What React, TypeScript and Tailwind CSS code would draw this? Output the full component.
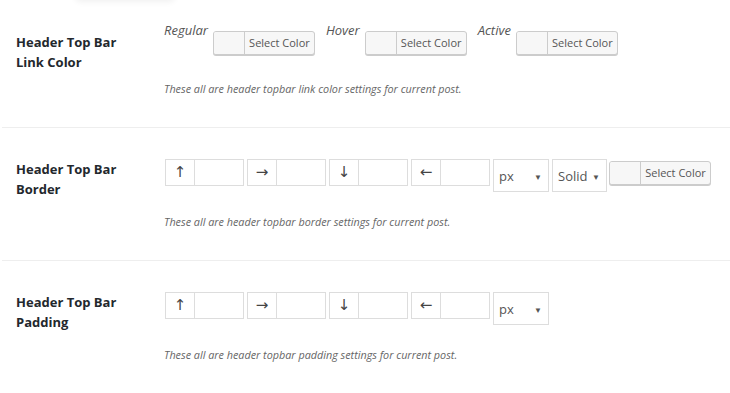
import React from "react";

const font = { fontFamily: '"Open Sans", "Noto Sans", sans-serif' };

function ColorButton() {
  return (
    <div className="flex h-[24px] w-[102px] shrink-0 overflow-hidden rounded-[3px] border border-[#cccccc] bg-[#f7f7f7] shadow-[0_1px_0_#cccccc]">
      <div className="w-[31px] shrink-0 border-r border-[#cccccc] bg-[#f7f7f7]" />
      <div className="flex flex-1 items-center justify-center text-[11px] text-[#555]">
        Select Color
      </div>
    </div>
  );
}

function ArrowInput({ arrow }: { arrow: string }) {
  return (
    <div className="flex h-[27px] w-[79px] shrink-0 border border-[#dddddd] bg-white">
      <div className="flex w-[29px] shrink-0 items-center justify-center border-r border-[#dddddd] text-[15px] text-[#444]" style={{ fontFamily: '"DejaVu Sans", sans-serif' }}>
        {arrow}
      </div>
      <div className="flex-1" />
    </div>
  );
}

function Select({ label, w }: { label: string; w: string }) {
  return (
    <div className={`flex h-[33px] ${w} shrink-0 items-center justify-between border border-[#dddddd] bg-white pl-[5px] pr-[6px] pt-[3px] text-[13px] text-[#555]`}>
      <span>{label}</span>
      <span className="text-[8px] text-[#555]">▼</span>
    </div>
  );
}

function Heading({ children }: { children: React.ReactNode }) {
  return (
    <div className="w-[164px] shrink-0 pl-4 text-[13px] font-bold leading-[20px] text-[#23282d]">
      {children}
    </div>
  );
}

function Desc({ children }: { children: React.ReactNode }) {
  return <div className="text-[10.8px] italic leading-[14px] text-[#666]">{children}</div>;
}

export default function App() {
  return (
    <div className="relative h-[393px] w-[730px] overflow-hidden bg-white" style={font}>
      <div className="absolute left-[75px] top-[-10px] h-[10px] w-[100px] rounded-full shadow-[0_2px_6px_rgba(0,0,0,0.06)]" />
      {/* Row 1 */}
      <div className="flex pt-[21px] pb-[31px]">
        <div className="pt-[11px]">
          <Heading>
            Header Top Bar
            <br />
            Link Color
          </Heading>
        </div>
        <div className="flex flex-col">
          <div className="flex items-start">
            {[
              ["Regular", "mr-[11px]"],
              ["Hover", "mr-[11px]"],
              ["Active", ""],
            ].map(([l, m]) => (
              <div key={l} className={`flex items-start ${m}`}>
                <span className="mr-[5px] text-[13px] italic leading-[18px] text-[#555]">{l}</span>
                <div className="mt-[10px]">
                  <ColorButton />
                </div>
              </div>
            ))}
          </div>
          <div className="mt-[27px]">
            <Desc>These all are header topbar link color settings for current post.</Desc>
          </div>
        </div>
      </div>
      <div className="ml-[2px] h-px bg-[#eeeeee]" />
      {/* Row 2 */}
      <div className="flex pt-[31px] pb-[31px]">
        <Heading>
          Header Top Bar
          <br />
          Border
        </Heading>
        <div className="flex flex-col">
          <div className="flex items-start gap-[3px] pl-px">
            <ArrowInput arrow="↑" />
            <ArrowInput arrow="→" />
            <ArrowInput arrow="↓" />
            <ArrowInput arrow="←" />
            <Select label="px" w="w-[56px]" />
            <Select label="Solid" w="w-[55px]" />
            <div className="-ml-px mt-[2px]">
              <ColorButton />
            </div>
          </div>
          <div className="mt-[23px]">
            <Desc>These all are header topbar border settings for current post.</Desc>
          </div>
        </div>
      </div>
      <div className="ml-[2px] h-px bg-[#eeeeee]" />
      {/* Row 3 */}
      <div className="flex pt-[31px] pb-[31px]">
        <Heading>
          Header Top Bar
          <br />
          Padding
        </Heading>
        <div className="flex flex-col">
          <div className="flex items-start gap-[3px] pl-px">
            <ArrowInput arrow="↑" />
            <ArrowInput arrow="→" />
            <ArrowInput arrow="↓" />
            <ArrowInput arrow="←" />
            <Select label="px" w="w-[56px]" />
          </div>
          <div className="mt-[23px]">
            <Desc>These all are header topbar padding settings for current post.</Desc>
          </div>
        </div>
      </div>
    </div>
  );
}
